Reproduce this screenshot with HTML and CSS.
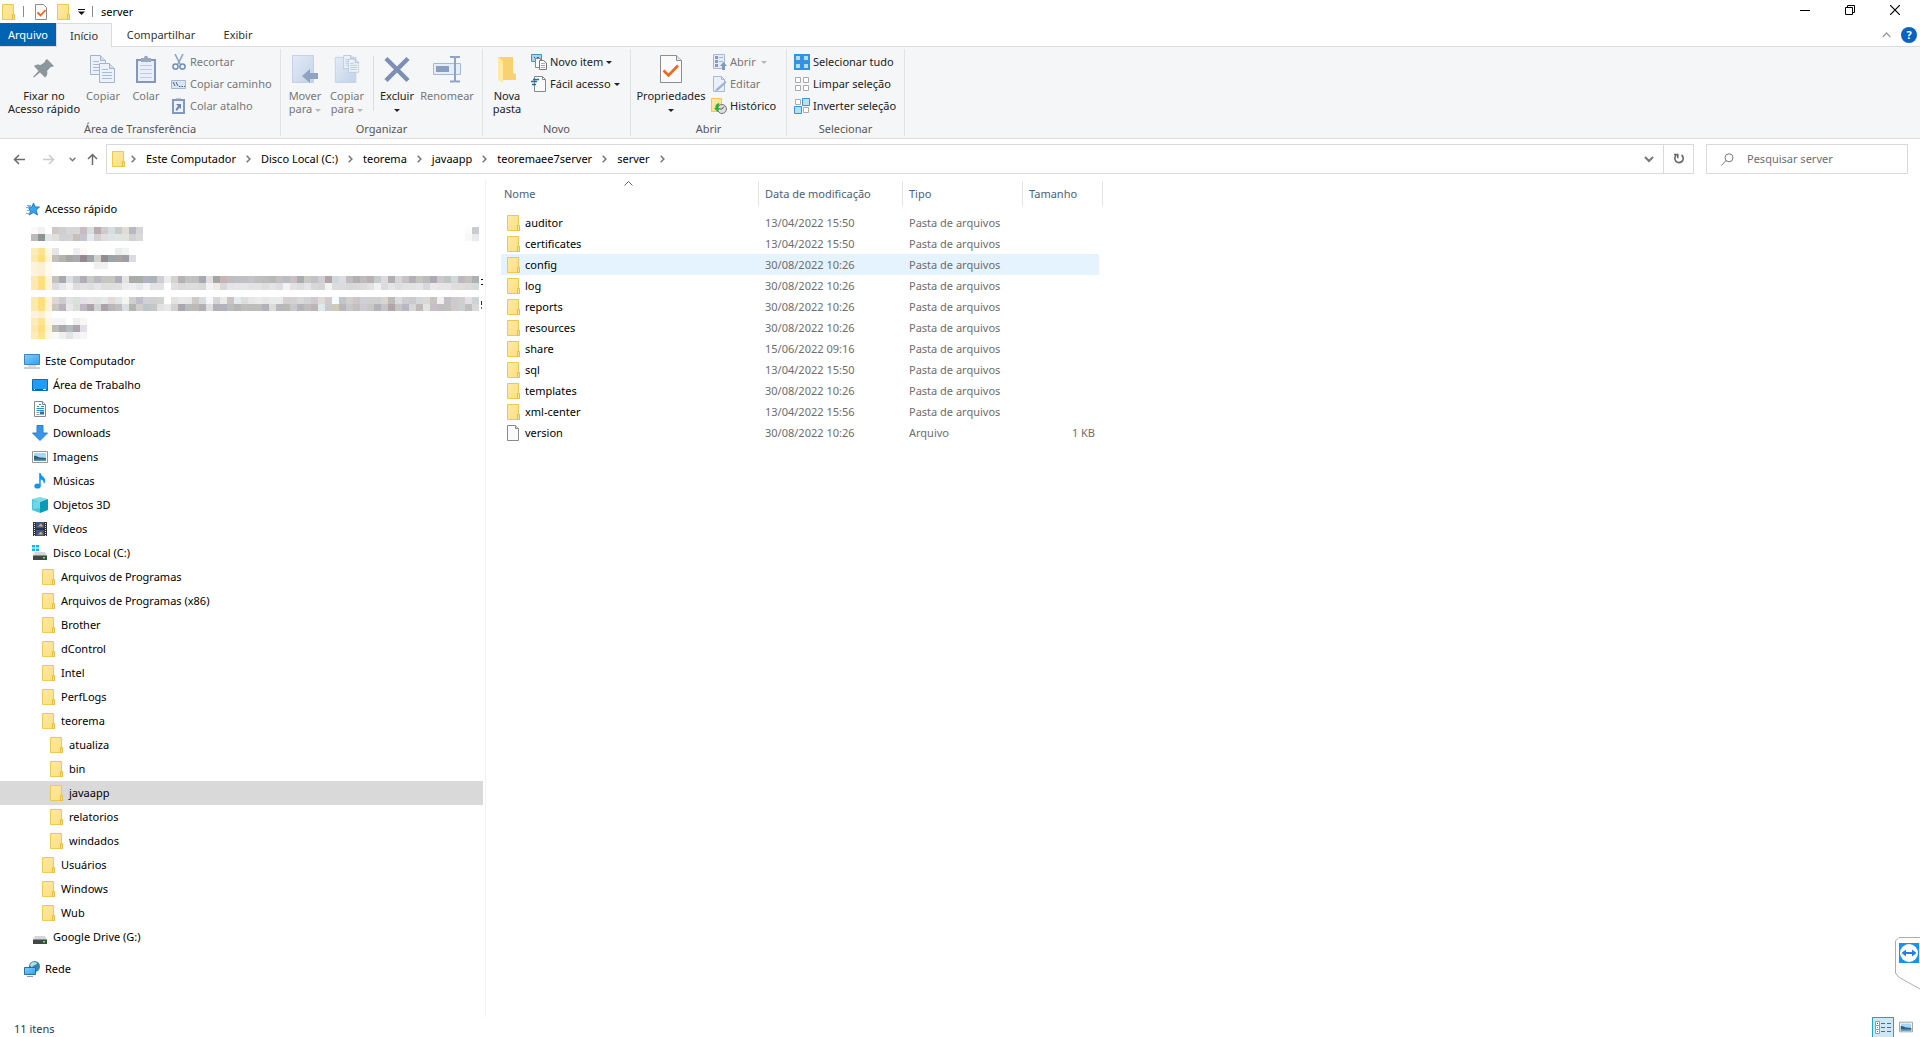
FILE: index.html
```html
<!DOCTYPE html>
<html lang="pt-BR">
<head>
<meta charset="utf-8">
<title>server</title>
<link rel="stylesheet" href="styles.css">
</head>
<body>
<svg class="sprite" aria-hidden="true">
  <defs>
    <linearGradient id="gold" x1="0" y1="0" x2="1" y2="1"><stop offset="0" stop-color="#ffeaa6"/><stop offset="1" stop-color="#fddf7f"/></linearGradient>
    <linearGradient id="sky" x1="0" y1="0" x2="1" y2="1"><stop offset="0" stop-color="#7fd0ff"/><stop offset="1" stop-color="#2ea0f0"/></linearGradient>
    <linearGradient id="pale" x1="0" y1="0" x2="1" y2="1"><stop offset="0" stop-color="#e3ebf6"/><stop offset="1" stop-color="#c3d2e8"/></linearGradient>
  </defs>
  <symbol id="folder" viewBox="0 0 16 16"><path d="M2.500 .5h11v15h-11z" fill="url(#gold)" stroke="#edc94f"/><path d="M12.500 10.500h2v5h-2z" fill="#ffe694" stroke="#e6bd3e"/></symbol>
  <symbol id="file" viewBox="0 0 16 16"><path d="M2.500 .5h8l3 3v12h-11z" fill="#fafafa" stroke="#8a8a8a"/><path d="M10.500 .5v3h3" fill="#ddd" stroke="#8a8a8a"/></symbol>
  <symbol id="checkdoc" viewBox="0 0 22 28"><path d="M.5.5h16l5 5v22H.5z" fill="#fafafa" stroke="#8c8c8c"/><path d="M16.500.5v5h5" fill="#e6e6e6" stroke="#8c8c8c"/><path d="M3.500 15.500l5 5 9.500-10" fill="none" stroke="#f2651b" stroke-width="2.600"/></symbol>
  <symbol id="drive" viewBox="0 0 16 16"><path d="M3 7h10l2 4H1z" fill="#d4d6d8"/><path d="M1 10.500h14V15H1z" fill="#43474a"/><path d="M11 12h2v1.500h-2z" fill="#4f4"/></symbol>
  <symbol id="picture" viewBox="0 0 16 16"><path d="M.5 2.500h15v11H.5z" fill="#fff" stroke="#979797"/><path d="M2 4h12v8H2z" fill="#a9d6f7"/><path d="M2 7c3-1 4 2 7 1.500l5 .5v3H2z" fill="#2c6178"/><path d="M2 10.500h12V12H2z" fill="#5497c4"/></symbol>
  <symbol id="chev" viewBox="0 0 5 8"><path d="M.7.700L3.900 4 .7 7.300" fill="none" stroke="#777" stroke-width="1.500"/></symbol>
  <symbol id="page" viewBox="0 0 16 20"><path d="M.5.5h10l5 5v14H.5z" fill="#edf2fa" stroke="#a4b4cf"/><path d="M10.500.5v5h5" fill="#d4deed" stroke="#a4b4cf"/><path d="M3 6.500h6M3 9.500h10M3 12.500h10M3 15.500h10" stroke="#a9bad5"/></symbol>
</svg>

<header class="titlebar">
  <div class="quick">
    <svg class="i16"><use href="#folder"/></svg>
    <span class="bar"></span>
    <button aria-label="Propriedades"><svg width="12" height="16" viewBox="0 0 12 16"><path d="M.5.5h8l3 3v12H.5z" fill="#fafafa" stroke="#8c8c8c"/><path d="M2.500 8.500l3 3 5-5.500" fill="none" stroke="#f2651b" stroke-width="1.800"/></svg></button>
    <button aria-label="Nova pasta"><svg class="i16"><use href="#folder"/></svg></button>
    <button aria-label="Personalizar"><svg width="7" height="6"><path d="M0 .5h7" stroke="#111"/><path d="M0 2.500h7L3.500 6z" fill="#111"/></svg></button>
    <span class="bar"></span>
    <span class="title">server</span>
  </div>
  <div class="winbtns">
    <button aria-label="Minimizar"><svg width="10" height="10"><path d="M0 5.500h10" stroke="#000"/></svg></button>
    <button aria-label="Restaurar"><svg width="10" height="10"><path d="M.5 2.500h7v7h-7zM2.500 2V.5h7v7H8" fill="none" stroke="#000"/></svg></button>
    <button aria-label="Fechar"><svg width="10" height="10"><path d="M0 0l10 10M10 0L0 10" stroke="#000" stroke-width="1.200"/></svg></button>
  </div>
</header>

<nav class="tabs">
  <button class="tab file">Arquivo</button>
  <button class="tab active">Início</button>
  <button class="tab wide">Compartilhar</button>
  <button class="tab">Exibir</button>
  <div class="help">
    <button aria-label="Minimizar a faixa"><svg width="9" height="6"><path d="M.7 5L4.500 1l3.800 4" fill="none" stroke="#999" stroke-width="1.300"/></svg></button>
    <button class="qmark" aria-label="Ajuda">?</button>
  </div>
</nav>

<section class="ribbon">
  <div class="group clipboard">
    <div class="tools">
      <button class="big w76"><svg width="28" height="28" viewBox="0 0 28 28"><path d="M17 4l7 7-2 1-1-.3-4 4.300c1 3 0 5-2 6.500l-5-5-6 5-1-.5 5.500-6-4.500-5c2-1.500 4-2 6.500-1L15 7l-.2-1z" fill="#8b969d"/></svg><span>Fixar no<br>Acesso rápido</span></button>
      <button class="big w42" disabled><svg width="26" height="28" viewBox="0 0 26 28"><use href="#page" width="16" height="20"/><use href="#page" x="9" y="8" width="16" height="20"/></svg><span>Copiar</span></button>
      <button class="big w44" disabled><svg width="20" height="28" viewBox="0 0 20 28"><path d="M1 5h18v22H1z" fill="#e8eff9" stroke="#8398bd" stroke-width="2"/><path d="M4 10.500h12M4 14.500h12M4 18.500h12M4 22.500h12" stroke="#c0cde1"/><path d="M5 7V3h3c0-3 4-3 4 0h3v4z" fill="#9aa8be"/></svg><span>Colar</span></button>
      <div class="list">
        <button class="small" disabled><svg class="i16"><path d="M4 0l5 10M12 0L7 10" stroke="#8ea3c4" stroke-width="1.600"/><circle cx="4.500" cy="12.500" r="2.600" fill="none" stroke="#6f8bb7" stroke-width="1.500"/><circle cx="11.500" cy="12.500" r="2.600" fill="none" stroke="#6f8bb7" stroke-width="1.500"/></svg>Recortar</button>
        <button class="small" disabled><svg class="i16"><path d="M.5 4.500h14v8H.5z" fill="#dbe6f5" stroke="#a6b6d1"/><path d="M2 6l2 4M5 6l2 4" stroke="#4b638c"/><path d="M8 10.500h1.500M10.500 10.500H12M13 10.500h1" stroke="#4b638c"/></svg>Copiar caminho</button>
        <button class="small" disabled><svg class="i16"><path d="M2 2h11v13H2z" fill="#eef3fb" stroke="#8398bd" stroke-width="2"/><path d="M5 3V.5h5V3z" fill="#8b9ab5"/><path d="M5 6h5v5L8.500 9.500 6 13l-1.500-1.500L7 8z" fill="#6d86b2"/></svg>Colar atalho</button>
      </div>
    </div>
    <div class="caption">Área de Transferência</div>
  </div>

  <div class="group organize">
    <div class="tools">
      <button class="big w42" disabled><svg width="28" height="28" viewBox="0 0 28 28"><path d="M1.500.5h21v27h-21z" fill="url(#pale)" stroke="#c4d1e6"/><path d="M11 21l8-7v4h8v6h-8v4z" fill="#8fa3c3"/></svg><span>Mover<br>para <i class="caret"></i></span></button>
      <button class="big w42" disabled><svg width="28" height="30" viewBox="0 0 28 30"><path d="M1.500 2.500h22v27h-22z" fill="url(#pale)" stroke="#c4d1e6"/><use href="#page" x="10" width="12" height="15"/><use href="#page" x="15" y="4" width="12" height="15"/></svg><span>Copiar<br>para <i class="caret"></i></span></button>
      <span class="split"></span>
      <button class="big w44"><svg width="26" height="28" viewBox="0 0 26 28"><path d="M2 3.500l22 22M24 3.500l-22 22" stroke="#7c90b3" stroke-width="4.500"/></svg><span>Excluir<br><i class="caret"></i></span></button>
      <button class="big w56" disabled><svg width="30" height="28" viewBox="0 0 30 28"><path d="M1.500 8.500h27v11h-27z" fill="#e4edfa" stroke="#a6b8d6"/><path d="M4 11h13v6H4z" fill="#8a9ebf"/><path d="M18 2h4l1 1 1-1h4M23 2v24M18 26.500h4l1-1 1 1h4" fill="none" stroke="#8fa3c3" stroke-width="2"/></svg><span>Renomear</span></button>
    </div>
    <div class="caption">Organizar</div>
  </div>

  <div class="group new">
    <div class="tools">
      <button class="big w42"><svg width="20" height="28" viewBox="0 0 20 28"><path d="M1 2h15v16l3 1v6H1z" fill="#f8d270"/><path d="M1 2l5 4v22l-5-3z" fill="#ffe9a3"/></svg><span>Nova<br>pasta</span></button>
      <div class="list">
        <button class="small"><svg class="i16"><path d="M.5.5h10v7H.5z" fill="#a5d3f0" stroke="#4a93bf"/><path d="M3 3l2 2 2-2 2 2" fill="none" stroke="#326786"/><path d="M4.500 4.500h5v9h-5z" fill="#fff" stroke="#888"/><path d="M8.500 6.500h4l3 2.500v6.500h-7z" fill="#fff" stroke="#777"/><path d="M10 9.500h4M10 13.500h4" stroke="#e89a87"/><path d="M10 11.500h4" stroke="#79a7dd"/></svg>Novo item<i class="caret"></i></button>
        <button class="small"><svg class="i16"><path d="M3.500.5h8l3 3v12h-11z" fill="#fafafa" stroke="#888"/><path d="M11.500.5v3h3" fill="none" stroke="#888"/><path d="M2 3.500h6M0 5.500h6M1 8.500h4" stroke="#1d6fb5" stroke-width="1.300"/></svg>Fácil acesso<i class="caret"></i></button>
      </div>
    </div>
    <div class="caption">Novo</div>
  </div>

  <div class="group open">
    <div class="tools">
      <button class="big w74"><svg width="22" height="28"><use href="#checkdoc"/></svg><span>Propriedades<br><i class="caret"></i></span></button>
      <div class="list">
        <button class="small" disabled><svg class="i16"><path d="M2.500.5h11v14h-11z" fill="#e3ebf7" stroke="#a9b9d4"/><path d="M4 2h3v3H4zM4 6h3v3H4zM4 10h3v3H4z" fill="#879bc0"/><path d="M8 3.500h4M8 7.500h4" stroke="#a3b5d2"/><path d="M12.500 8l3.500 4h-2v4h-3v-4H9z" fill="#8398bd"/></svg>Abrir<i class="caret gap"></i></button>
        <button class="small" disabled><svg class="i16"><path d="M2.500.5h8l3 3v12h-11z" fill="#e9f0fa" stroke="#a9b9d4"/><path d="M10.500.5v3h3" fill="none" stroke="#a9b9d4"/><path d="M5 13l9.500-8 1 1.500L7 14.500 4 15z" fill="#9db0d0"/></svg>Editar</button>
        <button class="small"><svg class="i16"><path d="M.5.5h10v13H.5z" fill="url(#gold)" stroke="#edc94f"/><circle cx="11" cy="11" r="4.500" fill="#ddd" stroke="#777"/><path d="M11 11l2-2.500M11 11H8.500" stroke="#555"/><path d="M8 5c-3 .5-4 3-3.500 5H3l3.500 4L9 10H7.500c-.5-1.500 0-2.500 1-3.500z" fill="#25b33a"/></svg>Histórico</button>
      </div>
    </div>
    <div class="caption">Abrir</div>
  </div>

  <div class="group select">
    <div class="tools">
      <div class="list">
        <button class="small"><svg class="i16"><path d="M1 1h6v6H1zM9 1h6v6H9zM1 9h6v6H1zM9 9h6v6H9z" fill="#b5dffd" stroke="#3393e0" stroke-width="2"/></svg>Selecionar tudo</button>
        <button class="small"><svg class="i16"><path d="M1.500 1.500h5v5h-5zM9.500 1.500h5v5h-5zM1.500 9.500h5v5h-5zM9.500 9.500h5v5h-5z" fill="#fff" stroke="#aaa"/></svg>Limpar seleção</button>
        <button class="small"><svg class="i16"><path d="M1.500 1.500h5v5h-5zM9.500 9.500h5v5h-5z" fill="#fff" stroke="#aaa"/><path d="M8.500.5h7v7h-7zM.5 8.500h7v7h-7z" fill="#b5dffd" stroke="#3393e0"/></svg>Inverter seleção</button>
      </div>
    </div>
    <div class="caption">Selecionar</div>
  </div>
</section>

<section class="address">
  <div class="history">
    <button aria-label="Voltar"><svg width="12" height="11"><path d="M12 5.500H1.500M6 1L1.500 5.500 6 10" fill="none" stroke="#6b6b6b" stroke-width="1.500"/></svg></button>
    <button aria-label="Avançar"><svg width="12" height="11"><path d="M0 5.500h10.500M6 1l4.500 4.500L6 10" fill="none" stroke="#ccc" stroke-width="1.500"/></svg></button>
    <button class="tiny" aria-label="Locais recentes"><svg width="7" height="5"><path d="M.7.700l2.800 3 2.800-3" fill="none" stroke="#777" stroke-width="1.400"/></svg></button>
    <button class="up" aria-label="Acima"><svg width="11" height="12"><path d="M5.500 12V1.500M1 6l4.500-4.500L10 6" fill="none" stroke="#6b6b6b" stroke-width="1.500"/></svg></button>
  </div>
  <div class="path">
    <svg class="i16"><use href="#folder"/></svg>
    <svg class="chev"><use href="#chev"/></svg><a href="#">Este Computador</a>
    <svg class="chev"><use href="#chev"/></svg><a href="#">Disco Local (C:)</a>
    <svg class="chev"><use href="#chev"/></svg><a href="#">teorema</a>
    <svg class="chev"><use href="#chev"/></svg><a href="#">javaapp</a>
    <svg class="chev"><use href="#chev"/></svg><a href="#">teoremaee7server</a>
    <svg class="chev"><use href="#chev"/></svg><a href="#">server</a>
    <svg class="chev"><use href="#chev"/></svg>
    <button class="drop" aria-label="Locais anteriores"><svg width="10" height="7"><path d="M1 1l4 4 4-4" fill="none" stroke="#777" stroke-width="2"/></svg></button>
    <button class="reload" aria-label="Atualizar"><svg width="12" height="12"><path d="M3.300 2.200A4.200 4.200 0 1 0 8.500 2" fill="none" stroke="#666" stroke-width="1.600"/><path d="M1 1.500h3.800v3.800" fill="none" stroke="#666" stroke-width="1.500"/></svg></button>
  </div>
  <label class="search">
    <svg width="13" height="13"><circle cx="8" cy="4.800" r="4" fill="none" stroke="#777"/><path d="M5 7.500L.5 12.500" stroke="#777"/></svg>
    <input type="text" placeholder="Pesquisar server" aria-label="Pesquisar server">
  </label>
</section>

<main class="main">
  <nav class="side">
    <ul class="tree">
      <li class="l0"><svg class="i16"><path d="M9.500 2l1.500 4h4.500l-3.500 3 1.500 5-4-2.500L5 14l1.500-4L4 6h4z" fill="#38a4ee" stroke="#1c7ec4"/><path d="M3 4.500h4M2 6.500h3M3 9.500h3M2 12.500h4" stroke="#6fb4e6"/></svg>Acesso rápido</li>
    </ul>
    <svg class="mosaic" id="mosaic" width="452" height="112" aria-hidden="true" shape-rendering="crispEdges"></svg>
    <ul class="tree">
      <li class="l0"><svg class="i16"><path d="M.5 1.500h15v10H.5z" fill="url(#sky)" stroke="#3b83b8"/><path d="M4 13h8" stroke="#bbb"/><path d="M0 15h16" stroke="#8fa4b4"/></svg>Este Computador</li>
      <li class="l1"><svg class="i16"><path d="M.5 2.500h15v11H.5z" fill="#1e9dfb" stroke="#0c6cb8"/><path d="M1 12.500h14" stroke="#075a9d"/><path d="M2 12.500h1M11 12.500h3" stroke="#fff"/></svg>Área de Trabalho</li>
      <li class="l1"><svg class="i16"><path d="M2.500.5h8l3 3v12h-11z" fill="#fff" stroke="#888"/><path d="M10.500.5v3h3" fill="#ddd" stroke="#888"/><path d="M7 3.500h2M5 5.500h2M9 5.500h3M4.500 7.500H12M4.500 9.500H12" stroke="#318bcd"/><path d="M4.500 11.500h3M4.500 13.500h3" stroke="#999"/><path d="M8 10.500h4v3H8z" fill="#336f8f"/></svg>Documentos</li>
      <li class="l1"><svg class="i16"><path d="M5 .5h6V8h4.500L8 15.500.5 8H5z" fill="#3896e6" stroke="#2b7fcb"/></svg>Downloads</li>
      <li class="l1"><svg class="i16"><use href="#picture"/></svg>Imagens</li>
      <li class="l1"><svg class="i16"><ellipse cx="5.500" cy="13" rx="3.200" ry="2.600" fill="#0d97ee"/><path d="M7.200 0h1.500c.3 3.500 4.500 4 4.500 7.500 0 1.500-.5 2.500-1.500 3.500.3-3-1-4-3-4.500V13H7.200z" fill="#0d97ee"/></svg>Músicas</li>
      <li class="l1"><svg class="i16"><path d="M0 2l8-2 8 2-8 3z" fill="#7fdbe7"/><path d="M0 2l8 3v11l-8-3z" fill="#48c5d8"/><path d="M8 5l8-3v11l-8 3z" fill="#079ab9"/><path d="M1 4l7 1v6l-7 1z" fill="#9ce9ee" opacity=".5"/></svg>Objetos 3D</li>
      <li class="l1"><svg class="i16"><path d="M1 1h14v14H1z" fill="#333"/><path d="M4 1h8v14H4z" fill="#3c5792"/><path d="M2.500 2v13M13.500 2v13" stroke="#ddd" stroke-dasharray="1 1"/><path d="M4 8h8" stroke="#111"/><path d="M6 5.500l3-3 2 3z" fill="#e4b14c"/><path d="M6 13.500l3-3 2 3z" fill="#e4b14c"/></svg>Vídeos</li>
      <li class="l1"><svg class="i16"><path d="M0 0h3v2.500H0zM4 0h3v2.500H4zM0 3.500h3V6H0zM4 3.500h3V6H4z" fill="#15b3f0"/><use href="#drive"/></svg>Disco Local (C:)</li>
      <li class="l2"><svg class="i16"><use href="#folder"/></svg>Arquivos de Programas</li>
      <li class="l2"><svg class="i16"><use href="#folder"/></svg>Arquivos de Programas (x86)</li>
      <li class="l2"><svg class="i16"><use href="#folder"/></svg>Brother</li>
      <li class="l2"><svg class="i16"><use href="#folder"/></svg>dControl</li>
      <li class="l2"><svg class="i16"><use href="#folder"/></svg>Intel</li>
      <li class="l2"><svg class="i16"><use href="#folder"/></svg>PerfLogs</li>
      <li class="l2"><svg class="i16"><use href="#folder"/></svg>teorema</li>
      <li class="l3"><svg class="i16"><use href="#folder"/></svg>atualiza</li>
      <li class="l3"><svg class="i16"><use href="#folder"/></svg>bin</li>
      <li class="l3 selected"><svg class="i16"><use href="#folder"/></svg>javaapp</li>
      <li class="l3"><svg class="i16"><use href="#folder"/></svg>relatorios</li>
      <li class="l3"><svg class="i16"><use href="#folder"/></svg>windados</li>
      <li class="l2"><svg class="i16"><use href="#folder"/></svg>Usuários</li>
      <li class="l2"><svg class="i16"><use href="#folder"/></svg>Windows</li>
      <li class="l2"><svg class="i16"><use href="#folder"/></svg>Wub</li>
      <li class="l1"><svg class="i16"><use href="#drive"/></svg>Google Drive (G:)</li>
      <li class="l0 network"><svg class="i16"><circle cx="10.500" cy="5.500" r="5.500" fill="#3487a9"/><path d="M6 4c2-4 5-3 7-2-1 3-4 1-5 5z" fill="#b5dceb"/><path d="M.5 6.500h11v7H.5z" fill="url(#sky)" stroke="#2a6f9e"/><path d="M3 15.500h6" stroke="#999"/></svg>Rede</li>
    </ul>
  </nav>

  <section class="content">
    <table class="files">
      <colgroup><col class="c-name"><col class="c-date"><col class="c-type"><col class="c-size"></colgroup>
      <thead><tr><th>Nome<svg class="sort" width="9" height="5"><path d="M.5 4.500l4-4 4 4" fill="none" stroke="#666"/></svg></th><th>Data de modificação</th><th>Tipo</th><th>Tamanho</th></tr></thead>
      <tbody>
        <tr><td><svg class="i16"><use href="#folder"/></svg>auditor</td><td>13/04/2022 15:50</td><td>Pasta de arquivos</td><td></td></tr>
        <tr><td><svg class="i16"><use href="#folder"/></svg>certificates</td><td>13/04/2022 15:50</td><td>Pasta de arquivos</td><td></td></tr>
        <tr class="hover"><td><svg class="i16"><use href="#folder"/></svg>config</td><td>30/08/2022 10:26</td><td>Pasta de arquivos</td><td></td></tr>
        <tr><td><svg class="i16"><use href="#folder"/></svg>log</td><td>30/08/2022 10:26</td><td>Pasta de arquivos</td><td></td></tr>
        <tr><td><svg class="i16"><use href="#folder"/></svg>reports</td><td>30/08/2022 10:26</td><td>Pasta de arquivos</td><td></td></tr>
        <tr><td><svg class="i16"><use href="#folder"/></svg>resources</td><td>30/08/2022 10:26</td><td>Pasta de arquivos</td><td></td></tr>
        <tr><td><svg class="i16"><use href="#folder"/></svg>share</td><td>15/06/2022 09:16</td><td>Pasta de arquivos</td><td></td></tr>
        <tr><td><svg class="i16"><use href="#folder"/></svg>sql</td><td>13/04/2022 15:50</td><td>Pasta de arquivos</td><td></td></tr>
        <tr><td><svg class="i16"><use href="#folder"/></svg>templates</td><td>30/08/2022 10:26</td><td>Pasta de arquivos</td><td></td></tr>
        <tr><td><svg class="i16"><use href="#folder"/></svg>xml-center</td><td>13/04/2022 15:56</td><td>Pasta de arquivos</td><td></td></tr>
        <tr><td><svg class="i16"><use href="#file"/></svg>version</td><td>30/08/2022 10:26</td><td>Arquivo</td><td>1 KB</td></tr>
      </tbody>
    </table>
  </section>
</main>

<footer class="status">
  <span class="count">11 itens</span>
  <div class="views">
    <button class="on" aria-label="Detalhes"><svg width="16" height="14"><path d="M.5.5h4v4h-4zM.5 4.500h4v4h-4zM.5 8.500h4v4h-4z" fill="#fff" stroke="#999"/><path d="M6 2.500h4M12 2.500h4M6 6.500h4M12 6.500h4M6 10.500h4M12 10.500h4" stroke="#666"/><path d="M2 2h1v1H2z" fill="#338"/><path d="M2 6h1v1H2z" fill="#28f"/><path d="M2 10h1v1H2z" fill="#d22"/></svg></button>
    <button aria-label="Ícones grandes"><svg width="14" height="14" viewBox="0 0 16 16"><use href="#picture"/></svg></button>
  </div>
</footer>

<button class="remote" aria-label="TeamViewer"><svg width="25" height="54"><path d="M25 .5H4L.5 4v32l3 4L25 52" fill="#fff" stroke="#aaacb5"/><path d="M4 6h20v20H4z" fill="#1593f5"/><circle cx="14" cy="16" r="9" fill="#fff"/><path d="M6.500 16l4.500-3.500V15h6v-2.500l4.500 3.500-4.500 3.500V17h-6v2.500z" fill="#1c82e6"/></svg></button>
<script src="mosaic.js"></script>
</body>
</html>
```
FILE: styles.css
```css
* { box-sizing: border-box; }
html, body { height: 100%; }
body {
  margin: 0;
  display: flex;
  flex-direction: column;
  position: relative;
  overflow: hidden;
  background: #fff;
  color: #000;
  font: 11px/16px "Noto Sans", "Open Sans", sans-serif;
}
button {
  border: 0;
  padding: 0;
  background: none;
  color: inherit;
  font: inherit;
  display: flex;
  align-items: center;
  justify-content: center;
}
svg { display: block; flex: none; }
.sprite { position: absolute; width: 0; height: 0; }
.i16 { width: 16px; height: 16px; }

.titlebar { display: flex; justify-content: space-between; height: 23px; }
.quick { display: flex; align-items: center; }
.quick button { margin-left: 5px; }
.quick button:nth-of-type(3) { margin-left: 7px; }
.quick .bar { width: 1px; height: 11px; background: #8a8a8a; margin-left: 7px; }
.quick .bar + button { margin-left: 11px; margin-right: 3px; }
.quick .title { margin-left: 8px; }
.winbtns { display: flex; padding-right: 3px; }
.winbtns button { width: 45px; height: 20px; }

.tabs { display: flex; height: 23px; }
.tab { width: 56px; color: #333; }
.tab.file { background: #0063b1; color: #fff; }
.tab.active {
  height: 24px;
  background: #f5f6f7;
  border: 1px solid #dadbdc;
  border-bottom: 0;
  z-index: 1;
}
.tab.wide { width: 98px; }
.help { margin-left: auto; display: flex; align-items: center; gap: 10px; padding-right: 3px; }
.qmark {
  width: 16px;
  height: 16px;
  border-radius: 50%;
  background: #0a63c2;
  color: #fff;
  font-weight: bold;
}

.ribbon {
  display: flex;
  height: 93px;
  background: #f5f6f7;
  border: solid #dadbdc;
  border-width: 1px 0;
  padding: 2px 0;
}
.group {
  display: flex;
  flex-direction: column;
  justify-content: space-between;
  border-right: 1px solid #e2e3e4;
}
.clipboard { width: 281px; }
.organize { width: 202px; }
.new { width: 148px; }
.open { width: 156px; }
.select { width: 118px; }
.tools { display: flex; padding-left: 3px; }
.clipboard .tools { padding-left: 6px; }
.select .tools { padding-left: 4px; }
.caption { text-align: center; color: #555; line-height: 14px; }
.big {
  flex-direction: column;
  justify-content: flex-start;
  padding-top: 6px;
  gap: 6px;
  line-height: 13px;
  color: #222;
  white-space: nowrap;
}
.big svg { height: 28px; }
.big:disabled, .small:disabled { color: #777; }
.w42 { width: 42px; }
.w44 { width: 44px; }
.w56 { width: 56px; }
.w74 { width: 74px; }
.w76 { width: 76px; }
.list { display: flex; flex-direction: column; padding: 2px 0 0 3px; }
.small { height: 22px; gap: 3px; justify-content: flex-start; color: #222; white-space: nowrap; }
.caret {
  display: inline-block;
  border: 3px solid transparent;
  border-top-color: currentColor;
  border-bottom: 0;
  vertical-align: middle;
}
.caret.gap { margin-left: 2px; }
:disabled .caret { opacity: .5; }
.split { width: 1px; height: 55px; margin: 7px 1px 0 5px; background: #dcdde0; }

.address { display: flex; height: 40px; padding: 5px 12px 5px 0; }
.history { display: flex; width: 106px; padding-left: 4px; }
.history button { width: 30px; }
.history .tiny { width: 17px; }
.history .up { width: 23px; }
.path { display: flex; flex: 1; align-items: center; border: 1px solid #d9d9d9; padding-left: 3px; }
.path a { color: #000; text-decoration: none; padding: 0 7px 0 10px; }
.path .chev { width: 5px; height: 8px; margin-left: 3px; }
.path .i16 { margin-right: 2px; }
.drop { margin-left: auto; width: 28px; }
.reload { width: 30px; align-self: stretch; border-left: 1px solid #d9d9d9; }
.search {
  display: flex;
  align-items: center;
  gap: 13px;
  width: 202px;
  margin-left: 12px;
  padding-left: 14px;
  border: 1px solid #d9d9d9;
}
.search input { flex: 1; min-width: 0; border: 0; padding: 0; outline: 0; background: none; font: inherit; }
.search input::placeholder { color: #6d6d6d; opacity: 1; }

.main { display: flex; flex: 1; min-height: 0; }
.side { width: 486px; padding-top: 18px; border-right: 1px solid #f3f3f3; }
.tree { list-style: none; margin: 0; padding: 0; }
.tree li { display: flex; align-items: center; gap: 5px; height: 24px; margin-right: 2px; }
.tree .l0 { padding-left: 24px; }
.tree .l1 { padding-left: 32px; }
.tree .l2 { padding-left: 40px; }
.tree .l3 { padding-left: 48px; }
.tree .selected { background: #d9d9d9; }
.tree .network { margin-top: 8px; }
.mosaic { margin: 6px 0 10px 31px; }

.content { flex: 1; padding-top: 2px; }
.files { margin-left: 15px; table-layout: fixed; border-collapse: separate; border-spacing: 0; width: 602px; }
.c-name { width: 258px; }
.c-date { width: 144px; }
.c-type { width: 120px; }
.c-size { width: 80px; }
.files th {
  position: relative;
  height: 25px;
  padding: 0 6px;
  text-align: left;
  font-weight: normal;
  color: #4c607a;
  border-right: 1px solid #e5e5e5;
}
.files th:first-child { padding-left: 3px; }
.sort { position: absolute; left: 48%; top: 0; }
.files td { height: 21px; padding: 0 6px; color: #6d6d6d; }
.files td:first-child { display: flex; align-items: center; gap: 4px; padding-left: 4px; color: #000; }
.files td:last-child { text-align: right; padding-right: 8px; }
.files tbody::before { content: ""; display: block; height: 6px; }
.hover td { background: #e5f3ff; }
.hover td:last-child { box-shadow: inset -4px 0 #fff; }

.status { display: flex; justify-content: space-between; height: 20px; padding: 0 7px 0 14px; }
.count { padding: 3px 10px 0 0; line-height: 18px; color: #1e395b; }
.views { display: flex; gap: 4px; }
.views button { width: 15px; }
.views .on { width: 22px; border: 1px solid #26a0da; border-bottom: 0; background: #cce8f6; }
.remote { position: absolute; right: 0; bottom: 46px; }
```
FILE: mosaic.js
```js
// Pixelated quick-access entries: [column, row, colours...] with 7px cells.
const folderA = "fcecb8 fde492 fdf7e6";
const folderB = "fbe9b0 fddf7d fdf3d8";
const folderC = "fdf2dc fdefd2 fefaf0";
const strips = [
  [0, 0, "fafafa f1f1f1 ffffff cfc9c5 cfcfcf d6d6d6 d6d6d6 c6bcc4 d9dde0 b9acae cfcacf d6dde0 c9cbcb e0dcd7 b8b9c0 d5d5d8"],
  [0, 7, "b9bbbb 8b948e e2e4e5 e0dfda d2d0d4 d2d2d2 c5c1b8 c6c4ce e4eaee d4d1d4 e2dcde dce4e4 dfe3e4 e2e2dc d1d1d4 d9d9dc"],
  [62, 0, "fcfcfc c9cdd0"],
  [62, 7, "f8f8f8 e9eaeb"],
  [0, 21, folderA + " e6e6e6 ffffff fefefa eeedf2 fbf8f5 ffffff ffffff ffffff ffffff ececea f2f2f5"],
  [0, 28, folderB + " c3bfbd b3b3b0 a6a6a6 abaab0 94888e 9da5a9 d2d0ce 938c90 9aa5a8 aaa2a0 9e9da3 dcdbe0"],
  [0, 35, folderC],
  [9, 35, "efefee f1f1f3"],
  [0, 42, folderC],
  [0, 49, folderB + " c4c2c1 a9a9ad dadfdf c7c8ce b3acb6 c8ccc8 bbb9c0 c6c4c2 c6c6c0 b3adba e4e4e4 a9aca9 a9aca9 b0b4c2 abb3b6 d0ced4 ececec d5d3d2 b6b2b1 c2c2c2 c0c0c0 a5a9b0 dfdfdf a4a6a4 c4b4b4 bfbdc2 c0c0c4 bfbfc5 c2c4c6 bfbdbe bcbcbc b6b9b6 c2bfc5 b9bdc0 c9c0bf aaacb0 c9c9c4 c1c1c6 d0cdd5 b2a5a6 cfd8dc dedcdc bcbcc2 b4b0b0 bcbcbc b9b0b4 c6cbcd dedcda b2aeb0 d2d8da c6c3c2 b3afbb c4c4be bbbbbb adaab6 d0c6d0 bfc4c4 d2d8da bdb8bf c6c0bd aeb0b4"],
  [0, 56, folderB + " dcdcdf e6e8ed f2f2f3 dddddd e2e2e4 dedede e6e5ea dedede dedede e0e0e0 ececec eeeef0 e6e8ed f3f3f3 e3e3e5 e3e3e3 ffffff e0e0e0 dadada dddddd dddddd d9d9d9 f0f2f5 eeebe4 d8d8dc e6e4e6 e6e6e6 e6e6e6 e3e3e3 e3e3e3 dedede e4e4e6 dedede f3f3f3 e3e3e3 dedede e4e4ea d8d8d8 d6d4d4 f3f3f0 dadce0 dcdcde d8d8d8 dadada dcdcdc e2e2e2 f1f1f1 dcdcdc e2e6e9 dedede e2e2e5 e2e2de e5e5e9 d8d8d8 eae8eb e8e6e4 e6e6e8 dedede e3ddd9 d8dadb d5d9da"],
  [0, 70, folderB + " dcd8d8 cdcdd0 e3e2e6 dae0da e4dfe8 e8e6e4 e3e3e3 e5e9eb e6dad9 e2e6e8 f5f5f0 d0ced0 c0bec6 d2d2d6 d0d0d0 d2d4d2 ffffff e4e2e0 e8e8e8 e6e6e6 cfcaca dadce0 f5f7fb d6d6d6 eaeaea cac4c8 e6eaec dedede e6e6e6 eaeae6 e6e6e6 e8eaec e8eaec d5cfd2 d3d3d5 d9d9d9 d3d3d3 cfcacf e0dbd8 cfcbcf f4feff c4c3c9 d2d0cc cdc5c6 d0d0d6 cfcfcf d0d0d2 d9d6d0 c0bab6 dadce2 d0cdd1 cacaca d5d8da dcd8d8 c8c4c4 eff1ec c3bdc8 cdcacb cfcfcf e4dfe2 ced4d4"],
  [0, 77, folderB + " c9c7c0 b7b4c0 e9e7e8 d8dfd9 c1b7c4 aca4a9 cfd4d2 aca2a9 b9b5b9 bebebe dadfe2 b4b4b1 d0cecc bec4ce c5c7c7 e2e2e2 e8e8e8 d4d2ce aba7af b7bcbe bfbaba b0b0b6 dedede b4b1b6 b1b4c0 bebeb8 b6b6b6 bfbfbd bdbdbb bdbdbb b0b3ba dedad8 b7b7be bbb9b4 c8c8cc b5b5b9 bebebe bdb4b4 dfe8ea c9c9cf cfcab5 b9b6bd c8c8ca c4bfbf cecad1 c9c8c5 b4b3bb c5c5c9 b0a6a8 c5c5c5 b8b8c2 d7d7d7 c1b9b9 e2e4de c7bec9 bfbfbd c1c0be cfc9cf ccd0d0 c1bdbf d7d9da"],
  [0, 84, folderC],
  [0, 91, folderA + " f6f6f6 f3f5f7 ffffff f0eff0 f8f7f4"],
  [0, 98, folderB + " bdbbb7 aaa9b1 b6babd ada5a9 e0dee7"],
  [0, 105, folderA + " f9f9f9 f0efeb dfe5e7 f2f0f0 f5f6fa"]
];
const mosaic = document.getElementById("mosaic");
const cell = (x, y, w, h, fill) => {
  const r = document.createElementNS("http://www.w3.org/2000/svg", "rect");
  Object.entries({ x, y, width: w, height: h, fill }).forEach(([k, v]) => r.setAttribute(k, v));
  mosaic.append(r);
};
for (const [col, y, colours] of strips) {
  colours.split(" ").forEach((c, i) => cell((col + i) * 7, y, 7, 7, "#" + c));
}
cell(450, 52, 2, 1, "#111");
cell(450, 57, 2, 1, "#111");
cell(450, 74, 1, 4, "#126");
cell(450, 80, 1, 2, "#a60");
```
